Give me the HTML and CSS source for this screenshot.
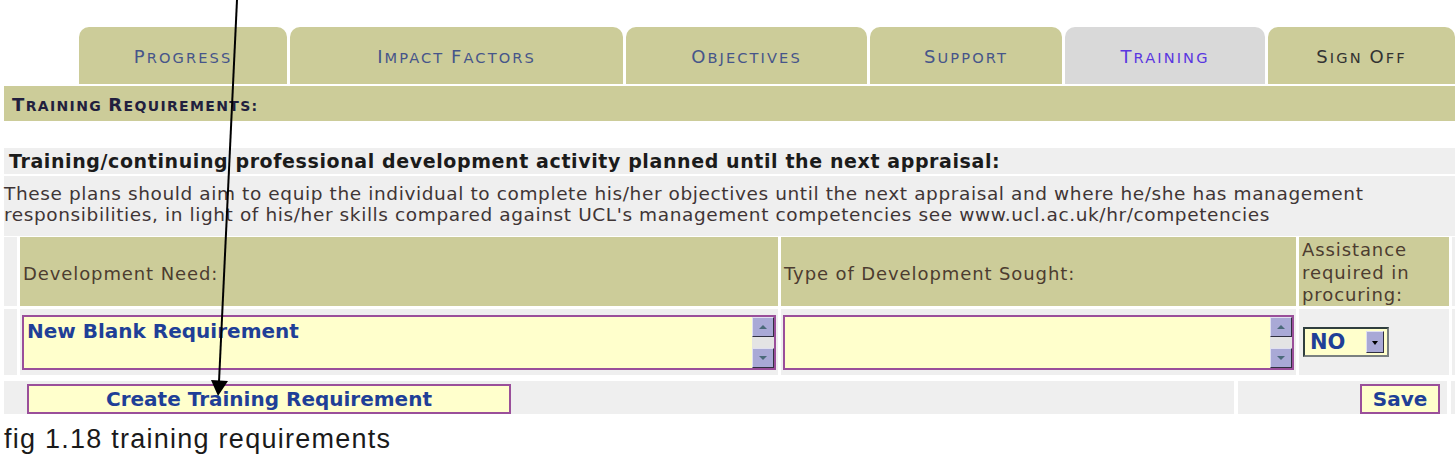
FILE: index.html
```html
<!DOCTYPE html>
<html>
<head>
<meta charset="utf-8">
<link rel="stylesheet" href="styles.css">
</head>
<body>
<div class="page">
  <svg class="arrow" width="260" height="400" viewBox="0 0 260 400">
    <line x1="237" y1="0" x2="219" y2="382" stroke="#000" stroke-width="2"/>
    <polygon points="211,380 228,381 218,396" fill="#000"/>
  </svg>

  <div class="tabs">
    <div class="tab t1"><span class="big">P</span>rogress</div>
    <div class="tab t2"><span class="big">I</span>mpact <span class="big">F</span>actors</div>
    <div class="tab t3"><span class="big">O</span>bjectives</div>
    <div class="tab t4"><span class="big">S</span>upport</div>
    <div class="tab t5 active"><span class="big">T</span>raining</div>
    <div class="tab t6 dark"><span class="big">S</span>ign <span class="big">O</span>ff</div>
  </div>

  <div class="section-title"><span class="big">T</span>raining <span class="big">R</span>equirements:</div>

  <div class="heading">Training/continuing professional development activity planned until the next appraisal:</div>
  <div class="desc">These plans should aim to equip the individual to complete his/her objectives until the next appraisal and where he/she has management<br>responsibilities, in light of his/her skills compared against UCL's management competencies see www.ucl.ac.uk/hr/competencies</div>

  <div class="grid">
    <div class="cell edge"></div>
    <div class="cell head">Development Need:</div>
    <div class="cell head">Type of Development Sought:</div>
    <div class="cell head small">Assistance required in procuring:</div>
    <div class="cell edge"></div>

    <div class="cell edge gray"></div>
    <div class="cell gray">
      <div class="area">
        <div class="area-text">New Blank Requirement</div>
        <div class="scroll"><span class="sbtn up"></span><span class="track"></span><span class="sbtn down"></span></div>
      </div>
    </div>
    <div class="cell gray">
      <div class="area">
        <div class="area-text"></div>
        <div class="scroll"><span class="sbtn up"></span><span class="track"></span><span class="sbtn down"></span></div>
      </div>
    </div>
    <div class="cell gray">
      <div class="select"><span class="sel-val">NO</span><span class="sel-btn"></span></div>
    </div>
    <div class="cell edge gray"></div>
  </div>

  <div class="actions">
    <div class="acell wide"><div class="btn create">Create Training Requirement</div></div>
    <div class="acell right"><div class="btn save">Save</div></div>
    <div class="acell edge2"></div>
  </div>

  <div class="caption">fig 1.18 training requirements</div>
</div>
</body>
</html>
```

FILE: styles.css
```css
html, body {
  margin: 0;
  padding: 0;
  background: #ffffff;
}
.page {
  position: relative;
  width: 1455px;
  height: 459px;
  overflow: hidden;
  font-family: "DejaVu Sans", Verdana, sans-serif;
}
.arrow {
  position: absolute;
  left: 0;
  top: 0;
  z-index: 5;
}
.tabs {
  display: flex;
  gap: 3px;
  padding: 27px 0 0 79px;
  height: 57px;
}
.tab {
  background: #cccc99;
  border-radius: 10px 10px 0 0;
  display: flex;
  align-items: baseline;
  justify-content: center;
  padding-top: 19px;
  text-transform: uppercase;
  font-size: 14.6px;
  letter-spacing: 2.1px;
  white-space: pre;
  color: #46558a;
  box-sizing: border-box;
}
.big { font-size: 18px; }
.t1 { width: 208px; }
.t2 { width: 333px; }
.t3 { width: 241px; }
.t4 { width: 192px; }
.t5 { width: 200px; }
.t6 { flex: 1; }
.tab.active {
  background: #d9d9d9;
  color: #5a36e0;
}
.tab.dark { color: #333333; }

.section-title {
  margin: 2px 0 0 4px;
  height: 35px;
  box-sizing: border-box;
  background: #cccc99;
  padding: 8px 0 0 8px;
  font-weight: bold;
  text-transform: uppercase;
  font-size: 14px;
  letter-spacing: 1.35px;
  color: #221f3e;
}
.heading {
  margin: 27px 0 0 4px;
  height: 26px;
  background: #efefef;
  display: flex;
  align-items: center;
  padding-left: 5px;
  font-weight: bold;
  font-size: 19px;
  letter-spacing: 0.6px;
  color: #1b1b1b;
}
.desc {
  margin: 2px 0 0 4px;
  height: 60px;
  box-sizing: border-box;
  background: #efefef;
  padding: 7px 0 0 0;
  font-size: 18.5px;
  letter-spacing: 0.6px;
  line-height: 21px;
  color: #3f3535;
}
.grid {
  display: grid;
  grid-template-columns: 13px 758px 515px 150px 1fr;
  grid-template-rows: 69px 66px;
  column-gap: 3px;
  row-gap: 3px;
  margin: 1px 0 0 4px;
}
.cell {
  box-sizing: border-box;
}
.edge { background: #efefef; }
.gray { background: #efefef; }
.head {
  background: #cccc99;
  display: flex;
  align-items: center;
  padding: 4px 0 0 3px;
  font-size: 18px;
  letter-spacing: 0.9px;
  color: #4c3c30;
}
.head.small {
  line-height: 22.5px;
  padding-top: 3px;
}
.area {
  margin: 6px 2px 5px 2px;
  height: 55px;
  box-sizing: border-box;
  border: 2px solid #9a4f9a;
  background: #ffffcc;
  display: flex;
}
.area-text {
  flex: 1;
  padding: 2px 0 0 3px;
  font-weight: bold;
  font-size: 20px;
  color: #1f3f97;
}
.scroll {
  width: 22px;
  display: flex;
  flex-direction: column;
  background: #dcdcdc;
}
.sbtn {
  height: 20px;
  background: #a9a9d6;
  border: 1px solid #e0e0f0;
  border-right-color: #303040;
  border-bottom-color: #303040;
  box-sizing: border-box;
  position: relative;
}
.sbtn::after {
  content: "";
  position: absolute;
  left: 6px;
  border-left: 4px solid transparent;
  border-right: 4px solid transparent;
}
.sbtn.up::after {
  top: 7px;
  border-bottom: 4px solid #4a6a7a;
}
.sbtn.down::after {
  top: 7px;
  border-top: 4px solid #4a6a7a;
}
.track {
  flex: 1;
  background: #e4e4e4;
}
.select {
  margin: 18px 0 0 4px;
  width: 86px;
  height: 30px;
  box-sizing: border-box;
  border: 2px solid #2f3e3e;
  border-right-color: #7a8080;
  border-bottom-color: #7a8080;
  background: #ffffcc;
  display: flex;
  align-items: center;
}
.sel-val {
  flex: 1;
  padding-left: 5px;
  font-weight: bold;
  font-size: 21px;
  color: #1f3f97;
}
.sel-btn {
  width: 18px;
  height: 22px;
  margin-right: 3px;
  background: #a9a9d6;
  border: 1px solid #e0e0f0;
  border-right-color: #303040;
  border-bottom-color: #303040;
  box-sizing: border-box;
  position: relative;
}
.sel-btn::after {
  content: "";
  position: absolute;
  left: 5px;
  top: 9px;
  border-left: 3px solid transparent;
  border-right: 3px solid transparent;
  border-top: 4px solid #000;
}
.actions {
  display: flex;
  gap: 4px;
  margin: 6px 0 0 4px;
  height: 33px;
}
.acell {
  background: #efefef;
  display: flex;
  align-items: flex-start;
}
.acell.wide {
  width: 1230px;
  padding: 3px 0 0 23px;
  box-sizing: border-box;
}
.acell.right {
  width: 209px;
  justify-content: flex-end;
  padding: 3px 7px 0 0;
  box-sizing: border-box;
}
.acell.edge2 { flex: 1; }
.btn {
  box-sizing: border-box;
  height: 30px;
  border: 2px solid #9a4f9a;
  background: #ffffcc;
  display: flex;
  align-items: center;
  justify-content: center;
  font-weight: bold;
  font-size: 20px;
  color: #1f3f97;
}
.btn.create { width: 484px; }
.btn.save { width: 80px; }
.caption {
  margin: 10px 0 0 4px;
  font-family: "Liberation Sans", Arial, sans-serif;
  font-size: 27px;
  letter-spacing: 1.25px;
  line-height: 30px;
  color: #1a1a1a;
}
```
